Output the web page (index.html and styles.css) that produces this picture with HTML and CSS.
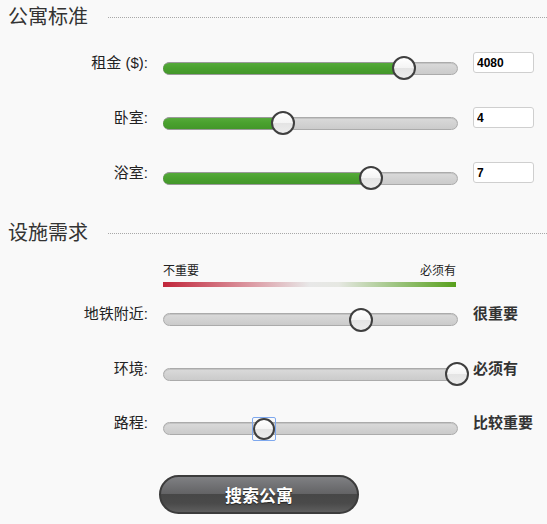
FILE: index.html
```html
<!DOCTYPE html>
<html lang="zh-CN">
<head>
<meta charset="utf-8">
<title>公寓搜索</title>
<link rel="stylesheet" href="styles.css">
</head>
<body>
<div class="page">
  <div class="section-head head-first"><h2>公寓标准</h2><span class="rule"></span></div>
  <div class="rows rows-a">
    <div class="row">
      <label class="label">租金 ($):</label>
      <div class="slider"><div class="track"><div class="fill" style="width:82%"></div><span class="handle" style="left:82%"></span></div></div>
      <input class="num" type="text" value="4080">
    </div>
    <div class="row">
      <label class="label">卧室:</label>
      <div class="slider"><div class="track"><div class="fill" style="width:40.5%"></div><span class="handle" style="left:40.5%"></span></div></div>
      <input class="num" type="text" value="4">
    </div>
    <div class="row">
      <label class="label">浴室:</label>
      <div class="slider"><div class="track"><div class="fill" style="width:70.5%"></div><span class="handle" style="left:70.5%"></span></div></div>
      <input class="num" type="text" value="7">
    </div>
  </div>

  <div class="section-head head-second"><h2>设施需求</h2><span class="rule"></span></div>
  <div class="legend-row">
    <div class="legend">
      <div class="legend-text"><span>不重要</span><span>必须有</span></div>
      <div class="legend-bar"></div>
    </div>
  </div>
  <div class="rows rows-b">
    <div class="row">
      <label class="label">地铁附近:</label>
      <div class="slider"><div class="track"><span class="handle" style="left:67.3%"></span></div></div>
      <span class="level">很重要</span>
    </div>
    <div class="row">
      <label class="label">环境:</label>
      <div class="slider"><div class="track"><span class="handle" style="left:100%"></span></div></div>
      <span class="level">必须有</span>
    </div>
    <div class="row">
      <label class="label">路程:</label>
      <div class="slider"><div class="track"><span class="handle focused" style="left:34%"></span></div></div>
      <span class="level">比较重要</span>
    </div>
  </div>
  <div class="actions"><button class="search-btn" type="button">搜索公寓</button></div>
</div>
</body>
</html>
```

FILE: styles.css
```css
html, body {
  margin: 0;
  padding: 0;
  background: #f9f9f9;
}
body {
  font-family: "Liberation Sans", "Noto Sans CJK SC", sans-serif;
  color: #222;
  width: 547px;
  height: 524px;
  overflow: hidden;
}
.page {
  display: flex;
  flex-direction: column;
}
.section-head {
  display: flex;
  align-items: center;
  height: 26px;
  padding-left: 8px;
}
.head-first { margin-top: 4px; }
.head-second { margin-top: 20px; }
.section-head h2 {
  margin: 0;
  font-size: 20px;
  line-height: 26px;
  font-weight: normal;
  color: #333;
}
.section-head .rule {
  flex: 1;
  margin-left: 20px;
  border-top: 1px dotted #a8a8a8;
  height: 0;
}
.rows-a { padding-top: 5px; }
.row {
  display: grid;
  grid-template-columns: 148px 295px auto;
  column-gap: 15px;
  align-items: center;
}
.rows-a .row { height: 55px; }
.rows-b .row { height: 54.5px; }
.label {
  text-align: right;
  font-size: 15px;
  line-height: 18px;
  color: #222;
}
.slider {
  padding-top: 11px;
}
.track {
  position: relative;
  height: 13px;
  box-sizing: border-box;
  border: 1px solid #ababab;
  border-radius: 7px;
  background: linear-gradient(#dadada, #cbcbcb);
  box-shadow: inset 0 1px 0 #c4c4c4;
}
.fill {
  position: absolute;
  left: -1px;
  top: -1px;
  bottom: -1px;
  border-radius: 7px 0 0 7px;
  background: linear-gradient(#55aa3a 0%, #4aa12f 45%, #43972a 100%);
  border-top: 1px solid #9a9a9a;
  border-bottom: 1px solid #9a9a9a;
  box-sizing: border-box;
}
.handle {
  position: absolute;
  top: 50%;
  width: 24px;
  height: 24px;
  box-sizing: border-box;
  border: 2px solid #3f3f3f;
  border-radius: 50%;
  background: linear-gradient(#ffffff 0%, #f4f4f4 50%, #e4e4e4 52%, #ececec 100%);
  transform: translate(-50%, -50%);
}
.handle.focused {
  width: 22px;
  height: 22px;
}
.handle.focused::after {
  content: "";
  position: absolute;
  left: -3px;
  top: -3px;
  right: -3px;
  bottom: -3px;
  border: 1.5px solid #7ea8ee;
  border-radius: 2px;
}
.num {
  width: 61px;
  height: 21px;
  box-sizing: border-box;
  margin: 0;
  border: 1px solid #cfcfcf;
  border-radius: 3px;
  background: #fff;
  padding: 0 3px;
  font-family: "Liberation Sans", sans-serif;
  font-weight: bold;
  font-size: 12px;
  color: #000;
}
.legend-row {
  display: grid;
  grid-template-columns: 148px 293px;
  column-gap: 15px;
  margin-top: 18px;
}
.legend {
  grid-column: 2;
}
.legend-text {
  display: flex;
  justify-content: space-between;
  font-size: 12px;
  line-height: 14px;
  color: #222;
}
.legend-bar {
  margin-top: 4px;
  height: 5px;
  background: linear-gradient(to right, #c1263a 0%, #dc9aa3 30%, #e8e8e8 50%, #e6e8e2 60%, #9cc47e 80%, #58a01c 100%);
}
.level {
  font-size: 15px;
  font-weight: bold;
  color: #333;
  line-height: 18px;
}
.actions {
  margin-top: 24px;
  padding-left: 159px;
}
.search-btn {
  width: 200px;
  height: 39px;
  box-sizing: border-box;
  border: 2px solid #3c3c3c;
  border-radius: 20px;
  background: linear-gradient(#7f8083 0%, #636365 48%, #474747 50%, #4a4a4a 75%, #5e5e5e 100%);
  color: #fff;
  font-family: "Liberation Sans", "Noto Sans CJK SC", sans-serif;
  font-weight: bold;
  font-size: 17px;
  padding: 0;
  text-shadow: 0 1px 1px #222;
}
```
